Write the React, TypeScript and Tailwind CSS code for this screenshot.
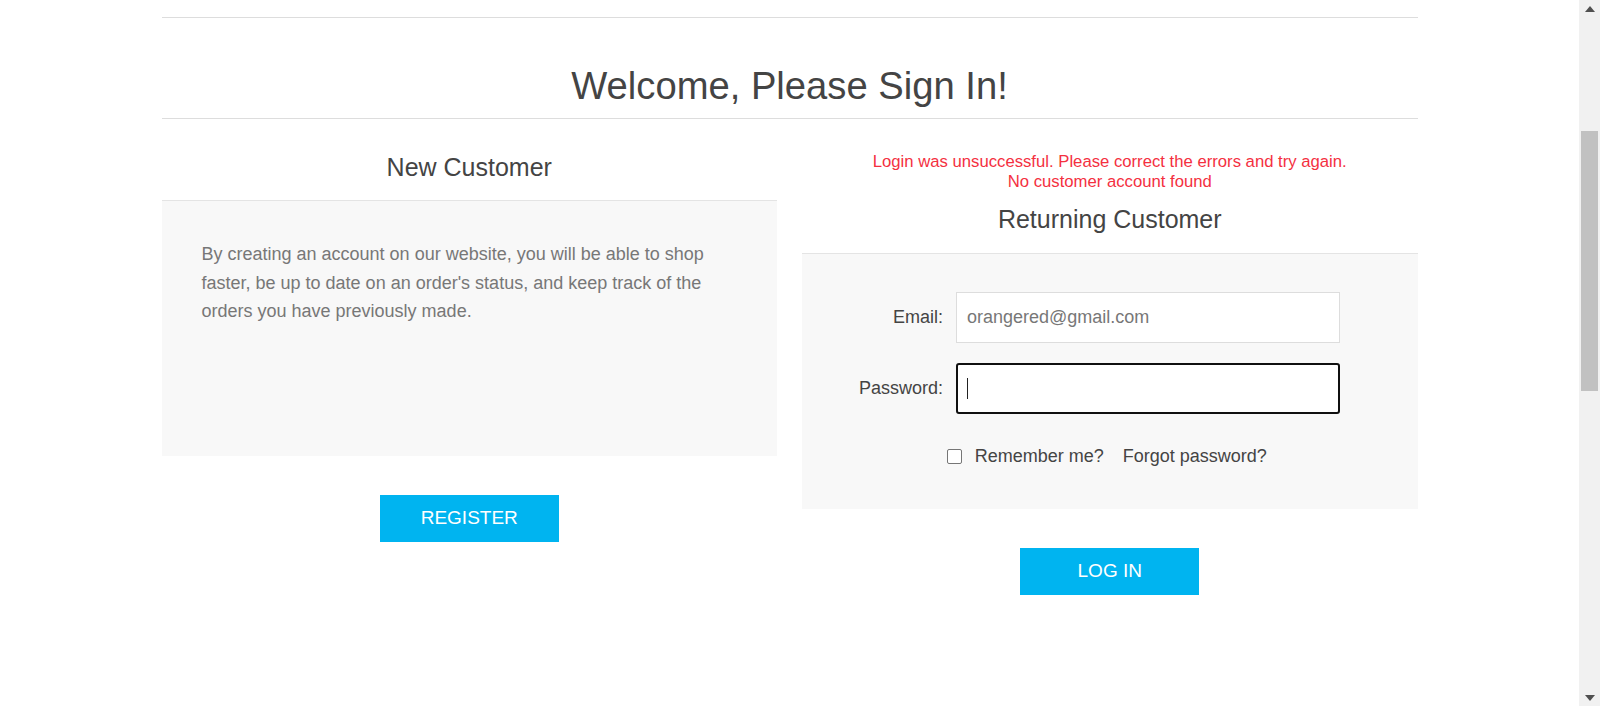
import React from "react";

const font = { fontFamily: '"Liberation Sans", Arial, sans-serif' };

export default function App() {
  return (
    <div className="flex h-[706px] w-full overflow-hidden bg-white" style={font}>
      <div className="flex-1 min-w-0">
        <div className="mx-auto w-[1256px] mt-[17px] border-t border-[#dddddd]">
          <div className="border-b border-[#dddddd] pt-[46px] pb-[10px] text-center">
            <h1 className="text-[38.2px] leading-[44px] text-[#444444] font-normal">Welcome, Please Sign In!</h1>
          </div>
          <div className="grid grid-cols-2 gap-[25px] pt-[33px]">
            {/* New customer */}
            <div className="flex flex-col">
              <div className="text-center text-[25px] leading-[30px] text-[#444444] pb-[18px]">New Customer</div>
              <div className="h-[256px] border-t border-[#e4e4e4] bg-[#f8f8f8] px-[40px] pt-[39px]">
                <p className="text-[18px] leading-[28.5px] text-[#777777]">
                  By creating an account on our website, you will be able to shop faster, be up to date on an order's status, and keep track of the orders you have previously made.
                </p>
              </div>
              <div className="flex justify-center mt-[39px]">
                <button className="w-[179px] h-[47px] bg-[#00b4f0] text-white text-[19px] uppercase">Register</button>
              </div>
            </div>
            {/* Returning customer */}
            <div className="flex flex-col">
              <div className="text-center text-[16.7px] leading-[20px] text-[#f4303f]">
                <div>Login was unsuccessful. Please correct the errors and try again.</div>
                <div>No customer account found</div>
              </div>
              <div className="mt-[12px] text-center text-[25px] leading-[30px] text-[#444444] pb-[19px]">Returning Customer</div>
              <div className="h-[256px] border-t border-[#e4e4e4] bg-[#f8f8f8] pt-[38px]">
                <div className="flex items-center">
                  <label className="w-[141px] text-right text-[18px] text-[#444444]">Email:</label>
                  <div className="ml-[13px] w-[384px] h-[51px] border border-[#dddddd] bg-white flex items-center px-[10px] text-[18px] text-[#777777]">
                    orangered@gmail.com
                  </div>
                </div>
                <div className="flex items-center mt-[20px]">
                  <label className="w-[141px] text-right text-[18px] text-[#444444]">Password:</label>
                  <div className="ml-[13px] w-[384px] h-[51px] border-2 border-[#101010] rounded-[3px] bg-white flex items-center px-[9px]">
                    <span className="block w-[1px] h-[21px] bg-[#222222]"></span>
                  </div>
                </div>
                <div className="flex items-center justify-center mt-[30px] h-[24px] pr-[6px] text-[18px] text-[#444444]">
                  <span className="block w-[15px] h-[15px] border border-[#767676] rounded-[2px] bg-white"></span>
                  <span className="ml-[13px]">Remember me?</span>
                  <span className="ml-[19px]">Forgot password?</span>
                </div>
              </div>
              <div className="flex justify-center mt-[39px]">
                <button className="w-[179px] h-[47px] bg-[#00b4f0] text-white text-[19px] uppercase">Log in</button>
              </div>
            </div>
          </div>
        </div>
      </div>
      {/* scrollbar */}
      <div className="w-[21px] h-full bg-[#f1f1f1] flex flex-col items-center">
        <div className="h-[17px] w-full flex items-center justify-center">
          <svg width="10" height="6" viewBox="0 0 10 6"><polygon points="5,0 10,6 0,6" fill="#505050" /></svg>
        </div>
        <div className="flex-1 w-full px-[2px]">
          <div className="mt-[114px] h-[260px] w-full bg-[#c1c1c1]"></div>
        </div>
        <div className="h-[17px] w-full flex items-center justify-center">
          <svg width="10" height="6" viewBox="0 0 10 6"><polygon points="0,0 10,0 5,6" fill="#505050" /></svg>
        </div>
      </div>
    </div>
  );
}
